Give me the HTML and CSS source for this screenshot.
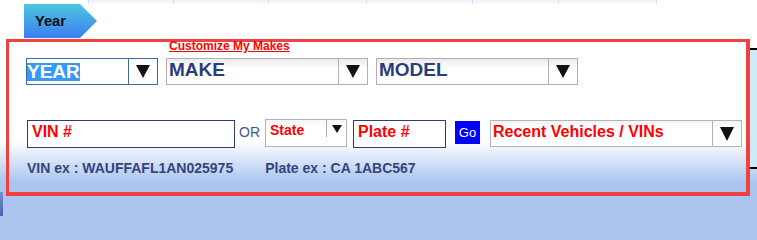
FILE: index.html
```html
<!DOCTYPE html>
<html lang="en">
<head>
<meta charset="utf-8">
<title>Vehicle Lookup</title>
<link rel="stylesheet" href="styles.css">
</head>
<body>
<div class="strip">
  <div class="strip-lead"></div>
  <div class="seg s1"></div>
  <div class="seg s2"></div>
  <div class="seg s3"></div>
  <div class="seg s4"></div>
  <div class="seg s5"></div>
  <div class="seg s6"></div>
</div>
<div class="tabs"><div class="tab">Year</div></div>
<div class="main">
  <div class="nub"></div>
  <div class="panel">
    <a class="customize" href="#">Customize My Makes</a>
    <div class="row1">
      <div class="sel sel-year">
        <span class="val"><span class="hl">YEAR</span></span>
        <span class="btn"><svg width="14" height="13" viewBox="0 0 14 13"><polygon points="0,0 14,0 7,13" fill="#111"/></svg></span>
      </div>
      <div class="sel sel-wide">
        <span class="val">MAKE</span>
        <span class="btn"><svg width="14" height="13" viewBox="0 0 14 13"><polygon points="0,0 14,0 7,13" fill="#111"/></svg></span>
      </div>
      <div class="sel sel-wide">
        <span class="val">MODEL</span>
        <span class="btn"><svg width="14" height="13" viewBox="0 0 14 13"><polygon points="0,0 14,0 7,13" fill="#111"/></svg></span>
      </div>
    </div>
    <div class="row2">
      <div class="inp inp-vin">VIN #</div>
      <div class="or">OR</div>
      <div class="state">
        <span class="state-val">State</span>
        <span class="state-btn"><svg width="10" height="8" viewBox="0 0 10 8"><polygon points="0,0 10,0 5,8" fill="#111"/></svg></span>
      </div>
      <div class="inp inp-plate">Plate #</div>
      <div class="go">Go</div>
      <div class="recent">
        <span class="recent-val">Recent Vehicles / VINs</span>
        <span class="recent-btn"><svg width="14" height="14" viewBox="0 0 14 14"><polygon points="0,0 14,0 7,14" fill="#111"/></svg></span>
      </div>
    </div>
    <div class="examples">
      <span>VIN ex : WAUFFAFL1AN025975</span>
      <span>Plate ex : CA 1ABC567</span>
    </div>
  </div>
  <div class="side"></div>
</div>
</body>
</html>
```

FILE: styles.css
```css
html, body {
  margin: 0;
  padding: 0;
}
body {
  font-family: "Liberation Sans", Arial, sans-serif;
  background-color: #abc5ef;
  background-image: linear-gradient(to bottom, #ffffff 0, #ffffff 141px, #abc5ef 182px, #abc5ef 216px);
  background-size: 100% 216px;
  background-repeat: no-repeat;
  width: 757px;
  height: 216px;
  overflow: hidden;
}

/* top faint strip */
.strip {
  display: flex;
  height: 4px;
}
.strip-lead {
  width: 88px;
  flex: none;
}
.seg {
  flex: none;
  height: 4px;
  background: linear-gradient(to bottom, #edf2fa, #f8fafd);
  border-left: 1px solid #d3def3;
  box-sizing: border-box;
}
.s1 { width: 85px; }
.s2 { width: 95px; }
.s3 { width: 98px; }
.s4 { width: 106px; }
.s5 { width: 86px; }
.s6 { width: 99px; border-right: 1px solid #d3def3; }

/* tab */
.tabs {
  display: flex;
  height: 34px;
}
.tab {
  margin-left: 24px;
  width: 73px;
  height: 34px;
  box-sizing: border-box;
  padding-left: 11px;
  line-height: 34px;
  font-size: 11pt;
  font-weight: bold;
  color: #111;
  background: linear-gradient(to bottom, #4fc6df, #3a7ff1);
  clip-path: polygon(0 0, 56px 0, 73px 17px, 56px 34px, 0 34px);
}

/* main row */
.main {
  display: flex;
  margin-top: 1px;
  height: 177px;
}
.nub {
  flex: none;
  width: 3px;
  height: 24px;
  margin-top: 153px;
  margin-right: 3px;
  background: linear-gradient(to bottom, #7593cf, #4663a8);
}
.panel {
  flex: none;
  width: 744px;
  height: 157px;
  box-sizing: border-box;
  border-style: solid;
  border-color: #f04141;
  border-width: 3px 4px 4px 3px;
}
.side {
  flex: none;
  width: 7px;
  margin-top: 9px;
  height: 121px;
  box-sizing: border-box;
  background: #cdeaf9;
  border-top: 2px solid #000;
  border-bottom: 2px solid #000;
}

.customize {
  display: block;
  width: fit-content;
  margin-left: 160px;
  font-size: 12px;
  font-weight: bold;
  line-height: 9px;
  color: #ff0000;
  text-decoration: underline;
}

/* row 1 selects */
.row1 {
  display: flex;
  gap: 8px;
  padding-left: 17px;
  margin-top: 7px;
  height: 27px;
}
.sel {
  box-sizing: border-box;
  height: 27px;
  display: flex;
  border: 1px solid #b0b0b0;
  background: linear-gradient(to bottom, #ebebeb, #ffffff 10px);
}
.sel-year {
  width: 132px;
  border-color: #3b6aa6;
  background: #fff;
}
.sel-wide {
  width: 202px;
}
.val {
  flex: 1;
  font-size: 19px;
  font-weight: bold;
  line-height: 22px;
  color: #2b3d7b;
  padding-left: 2px;
  white-space: nowrap;
  overflow: hidden;
}
.sel-year .val {
  padding-left: 0;
}
.hl {
  display: inline-block;
  margin-top: 4px;
  line-height: 18px;
  background: #3399ff;
  color: #fff;
}
.btn {
  flex: none;
  width: 29px;
  box-sizing: border-box;
  border-left: 1px solid #b0b0b0;
  display: flex;
  align-items: center;
  justify-content: center;
}
.sel-year .btn {
  border-left-color: #3b6aa6;
}
.btn svg, .recent-btn svg, .state-btn svg {
  display: block;
}

/* row 2 */
.row2 {
  display: flex;
  align-items: flex-start;
  padding-left: 18px;
  margin-top: 34px;
  height: 28px;
}
.inp {
  box-sizing: border-box;
  height: 28px;
  margin-top: 1px;
  border: 1px solid #2b3d7b;
  background: #fff;
  font-size: 16px;
  font-weight: bold;
  line-height: 18px;
  color: #ff0000;
  padding: 2px 0 0 4px;
}
.inp-vin {
  width: 208px;
}
.inp-plate {
  width: 93px;
  margin-left: 6px;
}
.or {
  margin-left: 4px;
  margin-top: 5px;
  font-size: 14px;
  line-height: 16px;
  color: #3b5a92;
}
.state {
  box-sizing: border-box;
  margin-left: 5px;
  width: 82px;
  height: 28px;
  border: 1px solid #b4b4b4;
  background: linear-gradient(to bottom, #f7f7f7, #ffffff 8px);
  display: flex;
  align-items: flex-start;
}
.state-val {
  flex: 1;
  padding: 2px 0 0 4px;
  font-size: 14px;
  font-weight: bold;
  line-height: 16px;
  color: #ff0000;
}
.state-btn {
  flex: none;
  width: 20px;
  height: 17px;
  box-sizing: border-box;
  border-left: 1px solid #a8a8a8;
  display: flex;
  justify-content: center;
  padding-top: 5px;
}
.go {
  margin-left: 9px;
  margin-top: 2px;
  width: 25px;
  height: 23px;
  background: #0000ff;
  color: #fff;
  font-size: 13px;
  line-height: 23px;
  text-align: center;
}
.recent {
  box-sizing: border-box;
  margin-left: 10px;
  margin-top: 1px;
  width: 252px;
  height: 27px;
  border: 1px solid #b4b4b4;
  background: linear-gradient(to bottom, #f4f4f4, #ffffff 8px);
  display: flex;
}
.recent-val {
  flex: 1;
  padding: 2px 0 0 2px;
  font-size: 16px;
  font-weight: bold;
  line-height: 18px;
  color: #ff0000;
  white-space: nowrap;
}
.recent-btn {
  flex: none;
  width: 29px;
  box-sizing: border-box;
  border-left: 1px solid #b4b4b4;
  display: flex;
  align-items: center;
  justify-content: center;
}

/* examples */
.examples {
  display: flex;
  gap: 32px;
  padding-left: 18px;
  margin-top: 13px;
  font-size: 14px;
  font-weight: bold;
  line-height: 16px;
  color: #33457f;
}
```
